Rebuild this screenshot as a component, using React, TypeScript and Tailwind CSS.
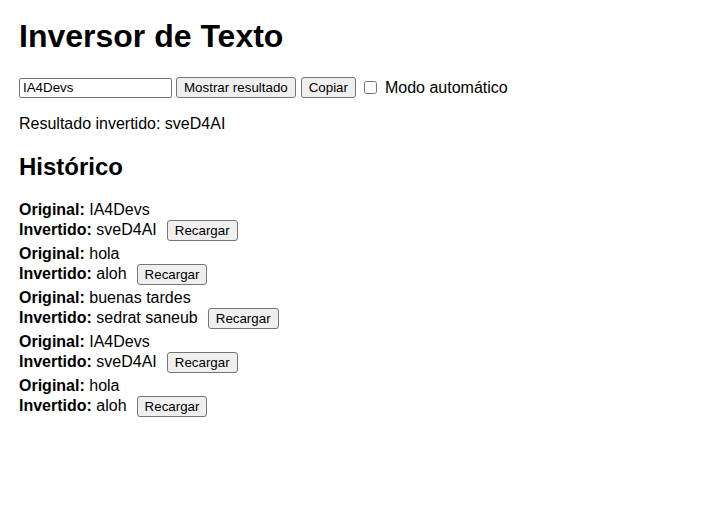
import { useState } from 'react';

type Entry = { original: string; invertido: string };

const historico: Entry[] = [
  { original: 'IA4Devs', invertido: 'sveD4AI' },
  { original: 'hola', invertido: 'aloh' },
  { original: 'buenas tardes', invertido: 'sedrat saneub' },
  { original: 'IA4Devs', invertido: 'sveD4AI' },
  { original: 'hola', invertido: 'aloh' },
];

const btn =
  'h-[21px] px-[7px] border border-[#767676] bg-[#efefef] rounded-[3px] text-[13.33px] leading-[15px] text-black';

export default function App() {
  const [texto, setTexto] = useState('IA4Devs');
  const [auto, setAuto] = useState(false);

  return (
    <div className="min-h-screen bg-white text-black px-[19px] pt-[18px] font-['Liberation_Sans',Arial,sans-serif] text-[16px] leading-[18px]">
      <h1 className="text-[32px] font-bold leading-[37px]">Inversor de Texto</h1>

      {/* Controles */}
      <div className="mt-[22px] flex items-center h-[21px]">
        <input
          type="text"
          value={texto}
          onChange={(e) => setTexto(e.target.value)}
          className="w-[153px] h-[20px] px-[3px] border border-[#767676] rounded-[2px] bg-white text-[13.33px] leading-[15px] text-black"
        />
        <button className={`${btn} ml-[4px]`}>Mostrar resultado</button>
        <button className={`${btn} ml-[5px]`}>Copiar</button>
        <input
          type="checkbox"
          checked={auto}
          onChange={(e) => setAuto(e.target.checked)}
          className="ml-[8px] w-[13px] h-[13px] m-0"
        />
        <span className="ml-[8px]">Modo automático</span>
      </div>

      <p className="mt-[17px]">Resultado invertido: sveD4AI</p>

      <h2 className="mt-[20px] text-[24px] font-bold leading-[28px]">Histórico</h2>

      <div className="mt-[20px] flex flex-col gap-[4px]">
        {historico.map((h, i) => (
          <div key={i}>
            <div className="h-[18px]">
              <b>Original:</b> {h.original}
            </div>
            <div className="h-[22px] flex items-center">
              <span>
                <b>Invertido:</b> {h.invertido}
              </span>
              <button className={`${btn} ml-[10px] h-[20px]`}>Recargar</button>
            </div>
          </div>
        ))}
      </div>
    </div>
  );
}
